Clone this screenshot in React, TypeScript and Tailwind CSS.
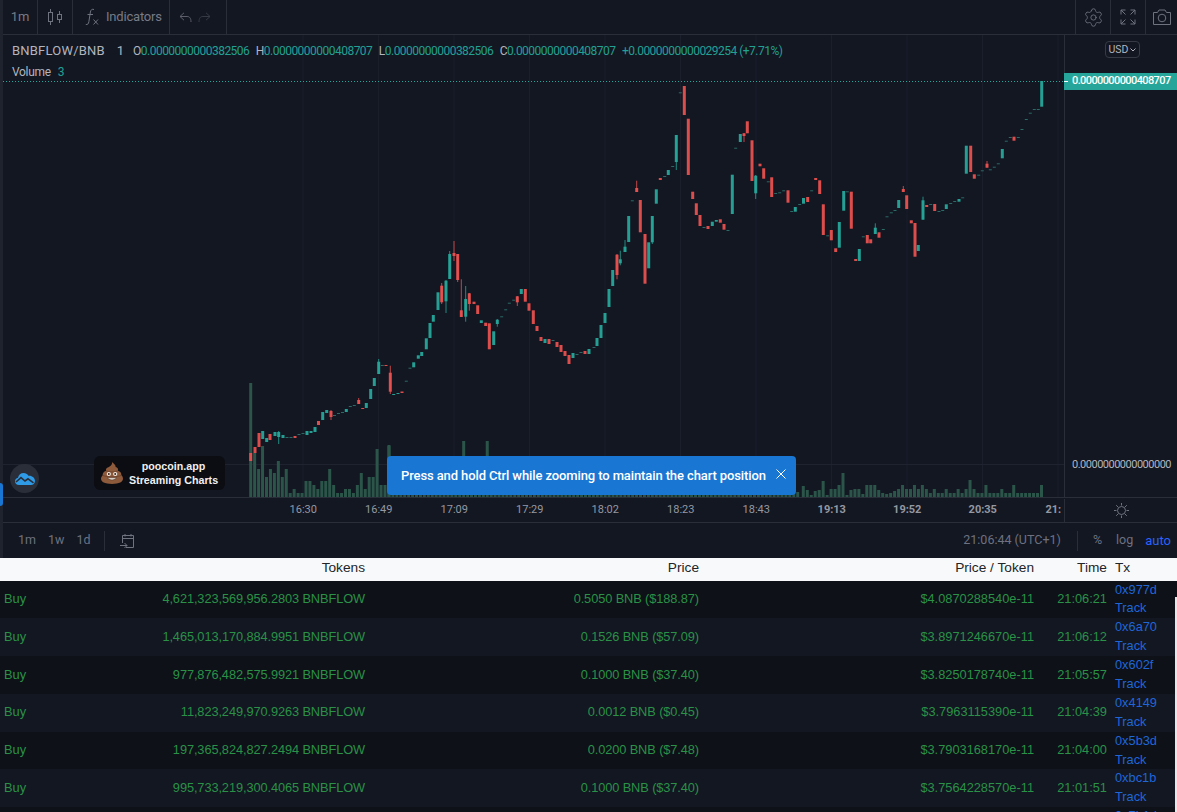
import { Settings } from 'lucide-react';

type Candle = [number, number, number, 'g' | 'r' | 'd', number?, number?];

const candles: Candle[] = [
  [250.7, 453, 461, 'r'], [255, 447, 453, 'r'], [259, 433, 447, 'r'], [262.7, 431, 439, 'g'], [266.7, 438, 442, 'g'],
  [270, 434, 440, 'r'], [275, 432, 436, 'g'], [278.7, 432, 437, 'g', 431, 444], [283, 435, 438, 'g'], [287, 437, 438, 'd'],
  [291, 437, 438, 'd'], [295, 436, 438, 'r'], [299, 434, 435, 'd'], [303, 433, 434, 'd'], [307, 431, 435, 'g'],
  [311, 431, 433, 'g'], [315, 427, 432, 'g'], [318.5, 421, 425, 'r'], [322.7, 412, 420, 'g'], [326.7, 410, 413, 'g'],
  [331, 411, 417, 'r', 410, 420], [334.5, 415, 416, 'd'], [338.5, 413, 414, 'd'], [342.5, 412, 413, 'd'], [346.3, 409, 412, 'g'],
  [350.3, 406, 407, 'd'], [354.3, 405, 406, 'd'], [358.7, 400, 404, 'r', 398, 404], [362.7, 408, 409, 'r'], [366.3, 403, 408, 'g'],
  [370.7, 389, 399, 'g'], [374.3, 378, 386, 'g'], [378.7, 361.7, 374, 'g', 359, 374], [382.3, 365, 366, 'd'], [386, 365, 366, 'r'],
  [390.3, 372.7, 391.7, 'r', 365.7, 394], [393.7, 394, 395, 'g'], [398, 393, 394, 'g'], [402, 391.5, 393, 'r'], [406.3, 380.7, 381.7, 'd'],
  [410, 367.7, 368.7, 'd'], [413.7, 362.3, 367.3, 'g'], [418.3, 355.3, 358.7, 'g'], [421.7, 352, 356, 'g'], [426.3, 338.3, 349.3, 'g'],
  [430, 323, 338, 'g'], [433.3, 315, 321.7, 'g'], [438, 292.3, 310, 'g'], [441.7, 285.7, 302.3, 'r', 283, 304], [446, 280.7, 301.3, 'g', 280, 313],
  [449.7, 254, 279, 'g', 251, 279], [454, 253, 256, 'r', 241, 261], [457.7, 254, 280, 'r', 254, 282], [461.3, 310.3, 317, 'r', 279.3, 317],
  [465.7, 299, 316.7, 'g', 286, 321.7], [469.3, 293.3, 304, 'r', 293, 310.7], [474, 301.7, 304, 'r'], [477.7, 305.3, 314, 'r'],
  [481.3, 320.3, 323, 'g'], [485.7, 322.7, 326, 'r'], [489.3, 323.3, 349.3, 'r'], [493.7, 331.3, 345, 'g'], [497.3, 319.7, 324, 'g', 319, 326.7],
  [501.7, 316.3, 317.3, 'd'], [505.7, 309.3, 310.3, 'd'], [509.3, 302.7, 303.7, 'd'], [513.7, 299.7, 300.7, 'd'], [517.3, 296.3, 302.3, 'r', 296, 306],
  [521.3, 289, 294, 'g'], [525.3, 289, 301.7, 'r'], [529, 303.3, 310.7, 'r'], [533.3, 310.3, 324, 'r'], [537, 326, 331, 'r'],
  [541, 337, 341, 'r'], [545, 339, 343, 'g'], [549, 339, 344, 'r'], [553, 340, 341, 'd'], [557, 342, 347, 'r'],
  [561, 345, 352, 'r'], [565, 351, 356, 'r'], [569, 355, 364, 'r'], [573, 353, 358, 'g'], [577, 354, 355, 'd'],
  [581, 352, 353, 'd'], [585, 351, 354, 'r'], [589, 349, 354, 'g'], [594, 347, 348, 'd'], [597, 338, 346, 'g'],
  [601, 325, 338, 'g'], [605, 313, 323, 'g'], [609, 289, 307, 'g'], [612.7, 270, 286, 'g'], [617, 254.7, 275, 'r', 254, 279.3],
  [620.3, 259.3, 263.3, 'g', 250.7, 265.3], [625, 246.7, 252, 'g', 240, 252], [628.7, 216, 242, 'g'], [632.3, 200.3, 201.3, 'd'],
  [636.7, 188, 192, 'r', 180.7, 192], [640.3, 200, 232.3, 'r'], [645, 234, 283.7, 'r'], [648.7, 242.3, 268.3, 'g'], [652.3, 216, 242.3, 'g', 216, 244],
  [656.3, 189.3, 203.7, 'g'], [660.3, 178, 180, 'r'], [664.7, 176, 177, 'd'], [668.3, 170, 175, 'g'], [672.7, 166, 167, 'd'],
  [676.3, 135, 162, 'g', 135, 170], [680.3, 92.3, 93.3, 'd'], [684.3, 86, 115, 'r'], [688.3, 118.7, 175, 'r'], [692.7, 191.7, 199, 'r'],
  [696.3, 203.3, 215, 'r'], [700, 215, 226, 'r'], [704, 227, 228, 'd'], [708, 226, 229, 'r'], [712.3, 221.7, 226, 'g'],
  [716.3, 220, 221.7, 'g'], [720.3, 219.3, 222.7, 'r'], [724, 224, 229.7, 'r'], [728, 230, 231, 'd'], [732.3, 174.7, 214, 'g'],
  [735.7, 147.7, 148.7, 'd'], [740.3, 134, 142, 'g'], [744, 133.3, 136, 'r', 133, 142], [747.3, 121.3, 133.3, 'r'], [752, 140.3, 181, 'r'],
  [755.7, 175.7, 193.3, 'g', 175, 199], [760, 163.7, 166.3, 'r'], [763.7, 168.3, 178.7, 'r'], [768.3, 181.3, 182.3, 'd'], [771.7, 177.3, 197, 'r'],
  [775.7, 193, 194, 'd'], [779.7, 192.3, 193.3, 'd'], [783.7, 190.3, 191.3, 'd'], [788, 190.3, 202.7, 'r'], [791.7, 211, 212, 'd'],
  [795.3, 207, 211.7, 'g'], [799.7, 204, 205, 'd'], [803.5, 198, 203.7, 'g'], [807.7, 197, 202, 'r'], [811.7, 190.3, 191.3, 'd'],
  [815.7, 178, 180, 'r'], [819.7, 180.3, 194, 'r'], [823.3, 204.3, 235, 'r'], [827.7, 235.3, 236.3, 'd'], [831.3, 230, 240.3, 'r'],
  [835.7, 248.3, 252, 'r'], [839.3, 222, 247.7, 'g'], [843.7, 191, 210.7, 'g'], [847.3, 191.3, 192.3, 'd'], [851.3, 191.7, 228.7, 'r'],
  [855.7, 259, 261, 'r'], [859.3, 249, 261, 'g'], [863.3, 236.3, 237.3, 'd'], [867.3, 235, 243.3, 'r'], [870.7, 239.3, 243.3, 'r'],
  [875.3, 227.7, 234, 'g', 223.3, 234], [879, 232.3, 237.7, 'r'], [883.3, 229, 230, 'd'], [887, 216.3, 217.3, 'd'], [891.3, 212.3, 213.3, 'd'],
  [895, 210, 211, 'd'], [898.7, 200, 208, 'g'], [903.3, 189, 192, 'r', 186, 192], [906.7, 195.3, 209, 'r'], [911.3, 220.3, 223.3, 'r'],
  [915, 223, 256.7, 'r'], [918.3, 245, 251, 'g'], [923, 200.3, 219.7, 'g', 196.7, 219.7], [926.7, 205, 207, 'r'], [930.7, 204, 205, 'd'],
  [934.7, 204, 211, 'r'], [939, 211, 212, 'd'], [942.7, 210, 211, 'd'], [946.3, 204.3, 209, 'g'], [950.7, 203, 204, 'd'],
  [954.7, 201, 202, 'd'], [959, 199, 201.7, 'g'], [962.7, 197.3, 198.3, 'd'], [966.3, 145.7, 173.7, 'g'], [970.7, 145.7, 172, 'r'],
  [974.3, 174.3, 178.7, 'r'], [978.7, 174.7, 175.7, 'd'], [982.3, 170.3, 171.3, 'd'], [987, 163.7, 167.7, 'r', 161, 167.7], [990.3, 169.3, 170.3, 'd'],
  [994.3, 166.7, 167.7, 'd'], [998.3, 163.3, 164.3, 'd'], [1002.3, 149, 158.3, 'g'], [1006.3, 140.7, 141.7, 'd'], [1010.3, 137, 138, 'd'],
  [1014, 136.7, 140.7, 'r'], [1018.3, 137, 138, 'd'], [1022, 129, 130, 'd'], [1026.3, 119, 120, 'd'], [1030.3, 112.7, 113.7, 'd'],
  [1034.3, 109, 110, 'd'], [1038.3, 109, 110, 'd'], [1041.7, 81, 106.7, 'g'],
];

const volLeft = [115, 45, 29, 52, 21, 29, 25, 37, 21, 29, 5, 9, 5, 5, 17, 17, 13, 9, 17, 17, 29, 13, 5, 5, 9, 9, 5, 13, 25, 9, 21, 21, 49, 13, 13, 52];
const volRight = [12, 8, 3, 7, 8, 17, 3, 9, 9, 13, 25, 3, 8, 9, 9, 4, 13, 13, 13, 8, 5, 4, 5, 7, 9, 13, 9, 9, 13, 9, 13, 9, 5, 9, 5, 5, 9, 5, 5, 9, 5, 9, 18, 9, 5, 5, 13, 5, 5, 5, 9, 5, 5, 13, 5, 5, 5, 5, 5, 5, 13];

const volumes: [number, number][] = [
  ...volLeft.map((h, i): [number, number] => [250.7 + i * 3.95, h]),
  ...Array.from({ length: 105 }, (_, i): [number, number] => {
    const x = 389 + i * 3.93;
    const h = Math.abs(x - 465) < 2 || Math.abs(x - 489) < 2 ? 57 : i === 0 ? 53 : 6 + ((i * 7) % 13);
    return [x, h];
  }),
  ...volRight.map((h, i): [number, number] => [803.3 + i * 3.97, h]),
];

const gridX = [303, 378.6, 454, 529.5, 605, 680.5, 756, 831.5, 907, 982.5, 1058];
const times = ['16:30', '16:49', '17:09', '17:29', '18:02', '18:23', '18:43', '19:13', '19:52', '20:35', '21:'];

const rows = [
  ['4,621,323,569,956.2803 BNBFLOW', '0.5050 BNB ($188.87)', '$4.0870288540e-11', '21:06:21', '0x977d'],
  ['1,465,013,170,884.9951 BNBFLOW', '0.1526 BNB ($57.09)', '$3.8971246670e-11', '21:06:12', '0x6a70'],
  ['977,876,482,575.9921 BNBFLOW', '0.1000 BNB ($37.40)', '$3.8250178740e-11', '21:05:57', '0x602f'],
  ['11,823,249,970.9263 BNBFLOW', '0.0012 BNB ($0.45)', '$3.7963115390e-11', '21:04:39', '0x4149'],
  ['197,365,824,827.2494 BNBFLOW', '0.0200 BNB ($7.48)', '$3.7903168170e-11', '21:04:00', '0x5b3d'],
  ['995,733,219,300.4065 BNBFLOW', '0.1000 BNB ($37.40)', '$3.7564228570e-11', '21:01:51', '0xbc1b'],
];

const ChartCanvas = () => (
  <svg viewBox="3 34 1061 464" className="block h-[464px] w-[1061px]">
    {gridX.map((x) => (
      <line key={x} x1={x} x2={x} y1={34} y2={498} stroke="#1b1f2b" strokeWidth={1} />
    ))}
    <line x1={3} x2={1064} y1={464.5} y2={464.5} stroke="#1f2330" strokeWidth={1} />
    <line x1={3} x2={1064} y1={81.5} y2={81.5} stroke="#26a69a" strokeWidth={1} strokeDasharray="1 2" />
    {volumes.map(([x, h]) => (
      <rect key={x} x={x - 1.5} y={498 - h} width={3} height={h} fill="#2c5549" />
    ))}
    {candles.map(([x, top, bottom, kind, wickTop, wickBottom]) => {
      const color = kind === 'r' ? '#ef5350' : kind === 'g' ? '#26a69a' : '#2c6f6a';
      return (
        <g key={x}>
          {wickTop !== undefined && (
            <line x1={x} x2={x} y1={wickTop} y2={wickBottom} stroke={color} strokeOpacity={0.8} strokeWidth={1} />
          )}
          <rect x={x - 1.5} y={top} width={3} height={bottom - top} fill={color} fillOpacity={kind === 'r' ? 0.92 : 0.95} />
        </g>
      );
    })}
  </svg>
);

const CandlesIcon = () => (
  <svg width="16" height="18" viewBox="0 0 16 18" fill="none" stroke="#6f7380" strokeWidth="1">
    <rect x="1.5" y="4.5" width="4" height="9" />
    <path d="M3.5 1v3.5M3.5 13.5V17" />
    <rect x="10.5" y="6.5" width="4" height="5" />
    <path d="M12.5 3v3.5M12.5 11.5V15" />
  </svg>
);

const FxIcon = () => (
  <svg width="14" height="18" viewBox="0 0 14 18" fill="none" stroke="#6f7380" strokeWidth="1">
    <path d="M9 1.5C7 .8 5.8 1.8 5.4 4L3.9 13.5C3.5 16 2.5 17 .8 16.4" />
    <path d="M2.5 6.5h5.5M8.5 11.5l4.5 5M13 11.5l-4.5 5" />
  </svg>
);

const UndoIcon = ({ flip, color }: { flip?: boolean; color: string }) => (
  <svg width="13" height="11" viewBox="0 0 13 11" fill="none" stroke={color} strokeWidth="1" className={flip ? '-scale-x-100' : ''}>
    <path d="M5 .8 1 4.5l4 3.7M1 4.5h7c2.6 0 4 1.6 4 5.5" />
  </svg>
);

const FullscreenIcon = () => (
  <svg width="16" height="16" viewBox="0 0 16 16" fill="none" stroke="#6f7380" strokeWidth="1">
    <path d="M1 5.5V1h4.5M1 1l4.5 4.5M10.5 1H15v4.5M15 1l-4.5 4.5M1 10.5V15h4.5M1 15l4.5-4.5M10.5 15H15v-4.5M15 15l-4.5-4.5" />
  </svg>
);

const CameraIcon = () => (
  <svg width="20" height="17" viewBox="0 0 20 17" fill="none" stroke="#6f7380" strokeWidth="1">
    <path d="M1.5 3.5h4l1.5-2.5h6l1.5 2.5h4v12h-17z" />
    <circle cx="10" cy="9" r="3.8" />
  </svg>
);

const GoToDateIcon = () => (
  <svg width="16" height="16" viewBox="0 0 16 16" fill="none" stroke="#6f7380" strokeWidth="1">
    <path d="M3.5 10V2.5h11v12H7M3.5 5.5h11M6 1v2.5M12 1v2.5" />
    <path d="M1 12.5h7M5.5 10l2.5 2.5L5.5 15" />
  </svg>
);

const SunIcon = () => (
  <svg width="15" height="15" viewBox="0 0 15 15" fill="none" stroke="#6f7380" strokeWidth="1">
    <circle cx="7.5" cy="7.5" r="4" />
    <path d="M7.5 0v2.5M7.5 12.5V15M0 7.5h2.5M12.5 7.5H15M2.2 2.2 4 4M11 11l1.8 1.8M2.2 12.8 4 11M11 4l1.8-1.8" />
  </svg>
);

const CloudLogo = () => (
  <svg width="20" height="13" viewBox="0 0 20 13">
    <path d="M4 13C1.6 13 0 11.4 0 9.3 0 7.5 1.2 6.1 3 5.8 3.6 3 5.8 1 8.6 1c2 0 3.8 1 4.8 2.7 3.4-.5 6.6 2 6.6 5.2 0 2.3-1.8 4.1-4.2 4.1z" fill="#2f9be6" />
    <path d="M1 10l5-4.4 4 3.4 3-2.2 5.5 4" fill="none" stroke="#2a2e39" strokeWidth="1.6" />
  </svg>
);

const PoopIcon = () => (
  <svg width="22" height="22" viewBox="0 0 22 22">
    <path d="M11 0c1 1.5 4 2.5 3.6 5 2 .4 2.8 2 2.4 3.8 2.2.6 3.4 2.2 3.4 4.4 1.2 1 1.6 2.4 1.6 3.6 0 3-3.6 5.2-11 5.2S0 19.800 0 16.800c0-1.300.6-2.600 1.600-3.400 0-2.200 1.200-3.800 3.400-4.600-.4-1.800.6-3.200 2.400-3.600C8.800 4.600 11.600 3 11 0z" fill="#8d5a3b" />
    <path d="M5 8.800c3.400 1.600 8.800 1.600 12 0M1.800 13.400c4 2 14 2 18.400 0" fill="none" stroke="#6b4029" strokeWidth="0.8" />
    <circle cx="7.800" cy="12" r="2.100" fill="#f3ece6" />
    <circle cx="14.200" cy="12" r="2.100" fill="#f3ece6" />
    <circle cx="7.800" cy="12" r="1" fill="#3a2418" />
    <circle cx="14.200" cy="12" r="1" fill="#3a2418" />
    <path d="M6.500 15.800c2.400 2.800 6.600 2.800 9 0z" fill="#f3ece6" stroke="#3a2418" strokeWidth="0.5" />
  </svg>
);

const CloseIcon = () => (
  <svg width="10" height="10" viewBox="0 0 10 10" fill="none" stroke="#ffffff" strokeWidth="1">
    <path d="M.5.5l9 9M9.500.5l-9 9" />
  </svg>
);

const LegendValue = ({ label, value }: { label: string; value: string }) => (
  <span className="mr-[6.5px]">
    <span className="text-[#b2b5be]">{label}</span>
    <span className="text-[#22a093]">{value}</span>
  </span>
);

const App = () => {
  return (
    <div className="relative h-[812px] w-[1177px] overflow-hidden bg-[#131722] font-['Liberation_Sans',sans-serif]">
      <div className="flex h-[558px] bg-[#131722] font-['Roboto',sans-serif]">
        <div className="w-[3px] shrink-0 bg-[#1f232e] pt-[483px]">
          <div className="h-[23px] w-[3px] rounded-r-sm bg-[#1976d2]" />
        </div>
        <div className="flex min-w-0 flex-1 flex-col">
          <div className="flex h-[35px] shrink-0 items-stretch border-b border-[#2a2e39] text-[13px] text-[#787b86]">
            <div className="flex w-[35px] items-center justify-center border-r border-[#2a2e39]">1m</div>
            <div className="flex w-[35px] items-center justify-center border-r border-[#2a2e39]">
              <CandlesIcon />
            </div>
            <div className="flex w-[97px] items-center gap-[7px] border-r border-[#2a2e39] pl-[12px] tracking-[-0.2px]">
              <FxIcon />
              <span>Indicators</span>
            </div>
            <div className="flex w-[57px] items-center gap-[6px] border-r border-[#2a2e39] pl-[9px]">
              <UndoIcon color="#5d606b" />
              <UndoIcon flip color="#363a45" />
            </div>
            <div className="ml-auto flex items-stretch">
              <div className="flex w-[35px] items-center justify-center border-l border-[#2a2e39]">
                <Settings size={21} strokeWidth={1} color="#6f7380" />
              </div>
              <div className="flex w-[35px] items-center justify-center border-l border-[#2a2e39]">
                <FullscreenIcon />
              </div>
              <div className="flex w-[32px] items-center justify-center border-l border-[#2a2e39]">
                <CameraIcon />
              </div>
            </div>
          </div>

          <div className="relative flex h-[463px] shrink-0 border-b border-[#2a2e39]">
            <div className="relative w-[1061px] shrink-0 overflow-hidden">
              <div className="-mt-px">
                <ChartCanvas />
              </div>
              <div className="absolute left-[9px] top-[8px] flex h-[16px] items-center whitespace-nowrap text-[12px] tracking-[-0.52px]">
                <span className="mr-[12px] text-[13px] tracking-[0.2px] text-[#b2b5be]">BNBFLOW/BNB</span>
                <span className="mr-[9px] text-[13px] tracking-normal text-[#b2b5be]">1</span>
                <LegendValue label="O" value="0.0000000000382506" />
                <LegendValue label="H" value="0.0000000000408707" />
                <LegendValue label="L" value="0.0000000000382506" />
                <LegendValue label="C" value="0.0000000000408707" />
                <span className="text-[#22a093]">+0.0000000000029254 (+7.71%)</span>
              </div>
              <div className="absolute left-[9px] top-[29px] flex h-[16px] items-center gap-[7px] text-[12px] tracking-[-0.3px] text-[#b2b5be]">
                <span>Volume</span>
                <span className="text-[#22a093]">3</span>
              </div>
              <div className="absolute left-[7px] top-[429px] flex h-[29px] w-[29px] items-center justify-center rounded-full bg-[#2a2e39]">
                <CloudLogo />
              </div>
              <div className="absolute left-[91px] top-[421px] flex h-[34px] w-[131px] items-center gap-[6px] rounded-md bg-[#0b0d12] pl-[7px]">
                <PoopIcon />
                <div className="text-center font-['Liberation_Sans',sans-serif] text-[10.7px] font-bold leading-[14px] text-[#f0f0f0]">
                  <div>poocoin.app</div>
                  <div>Streaming Charts</div>
                </div>
              </div>
              <div className="absolute left-[384px] top-[421px] flex h-[39px] w-[409px] items-center justify-between rounded bg-[#1976d2] pl-[14px] pr-[10px] text-[13px] font-medium tracking-[-0.11px] text-white">
                <span>Press and hold Ctrl while zooming to maintain the chart position</span>
                <span className="mb-[4px]">
                  <CloseIcon />
                </span>
              </div>
            </div>
            <div className="relative flex-1 border-l border-[#2a2e39] text-[11px] text-[#b2b5be]">
              <div className="absolute left-[40px] top-[6px] flex h-[17px] w-[35px] items-center justify-center rounded border border-[#363a45] text-[10.5px]">
                USD
                <svg width="6" height="4" viewBox="0 0 6 4" fill="none" stroke="#b2b5be" className="ml-[2px]">
                  <path d="M.5.500 3 3 5.500.500" />
                </svg>
              </div>
              <div className="absolute -left-px top-[38px] flex h-[17px] w-[114px] items-center bg-[#26a69a] text-[11px] font-medium tracking-[-0.6px] text-white">
                <span className="mr-[2px] h-px w-[4px] bg-white" />
                <span className="ml-[2px]">0.0000000000408707</span>
              </div>
              <div className="absolute left-[7px] top-[422px] tracking-[-0.5px]">0.0000000000000000</div>
            </div>
          </div>

          <div className="flex h-[25px] shrink-0 border-b border-[#2a2e39] pt-px text-[11px] text-[#9598a1]">
            <div className="flex w-[1061px] shrink-0 items-center overflow-hidden pl-[262.5px]">
              {times.map((t, i) => (
                <span key={t} className={`w-[75.5px] shrink-0 text-center ${i >= 7 ? 'font-bold' : ''} ${t === '21:' ? '-ml-[5px]' : ''}`}>
                  {t}
                </span>
              ))}
            </div>
            <div className="flex flex-1 items-center justify-center border-l border-[#2a2e39]">
              <SunIcon />
            </div>
          </div>

          <div className="flex flex-1 items-center text-[12.5px] text-[#6d7180]">
            <div className="flex w-[101px] items-center gap-[12px] pl-[15px]">
              <span>1m</span>
              <span>1w</span>
              <span>1d</span>
            </div>
            <div className="h-[20px] w-px bg-[#2a2e39]" />
            <div className="ml-[14px]">
              <GoToDateIcon />
            </div>
            <div className="ml-auto flex items-center pr-[6px]">
              <span className="mr-[16px]">21:06:44 (UTC+1)</span>
              <span className="mr-[15px] h-[20px] w-px bg-[#2a2e39]" />
              <span className="mr-[14px]">%</span>
              <span className="mr-[12px]">log</span>
              <span className="text-[13px] text-[#2962ff]">auto</span>
            </div>
          </div>
        </div>
      </div>

      <div className="text-[12.8px] leading-[18.9px]">
        <div className="grid h-[22.5px] grid-cols-[50px_315px_334px_335px_73px_70px] items-center bg-[#f8f9fa] pb-[1.5px] text-[13.7px] text-[#212529]">
          <span />
          <span className="text-right">Tokens</span>
          <span className="text-right">Price</span>
          <span className="text-right">Price / Token</span>
          <span className="text-right">Time</span>
          <span className="pl-[8px]">Tx</span>
        </div>
        {rows.map((row, i) => (
          <div
            key={row[4]}
            className={`grid h-[37.8px] grid-cols-[50px_315px_334px_335px_73px_70px] items-center text-[#2a9147] ${i % 2 === 0 ? 'bg-[#0e1118]' : 'bg-[#131722]'}`}
          >
            <span className="pl-[4px]">Buy</span>
            <span className="text-right tracking-[-0.1px]">{row[0]}</span>
            <span className="text-right tracking-[-0.1px]">{row[1]}</span>
            <span className="text-right">{row[2]}</span>
            <span className="text-right">{row[3]}</span>
            <div className="pl-[8px] text-[#1f66d8]">
              <div>{row[4]}</div>
              <div>Track</div>
            </div>
          </div>
        ))}
        <div className="grid h-[38px] grid-cols-[50px_315px_334px_335px_73px_70px] bg-[#0e1118] text-[#1f66d8]">
          <div className="col-start-6 pl-[8px]">0x7b1d</div>
        </div>
      </div>

      <div className="absolute bottom-0 right-0 top-[597px] w-[2px] bg-[#e6e6e6]" />
    </div>
  );
};

export default App;
